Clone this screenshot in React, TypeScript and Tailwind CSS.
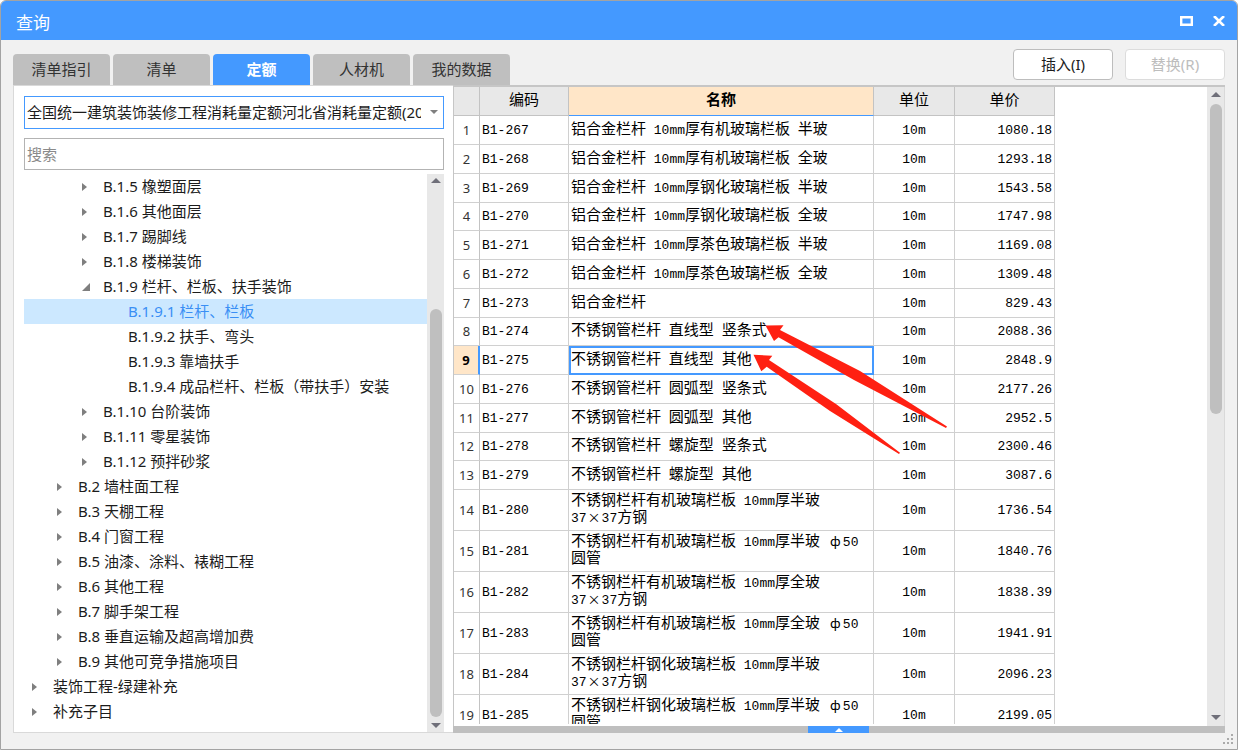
import { useState } from "react"
import { clsx } from "clsx"

interface TreeItem {
  label: string
  level: 1 | 2 | 3 | 4
  open?: boolean
}

interface QuotaRow {
  code: string
  name: string
  price: string
}

const tabs = ["清单指引", "清单", "定额", "人材机", "我的数据"]

const tree: TreeItem[] = [
  { label: "B.1.5 橡塑面层", level: 3 },
  { label: "B.1.6 其他面层", level: 3 },
  { label: "B.1.7 踢脚线", level: 3 },
  { label: "B.1.8 楼梯装饰", level: 3 },
  { label: "B.1.9 栏杆、栏板、扶手装饰", level: 3, open: true },
  { label: "B.1.9.1 栏杆、栏板", level: 4 },
  { label: "B.1.9.2 扶手、弯头", level: 4 },
  { label: "B.1.9.3 靠墙扶手", level: 4 },
  { label: "B.1.9.4 成品栏杆、栏板（带扶手）安装", level: 4 },
  { label: "B.1.10 台阶装饰", level: 3 },
  { label: "B.1.11 零星装饰", level: 3 },
  { label: "B.1.12 预拌砂浆", level: 3 },
  { label: "B.2 墙柱面工程", level: 2 },
  { label: "B.3 天棚工程", level: 2 },
  { label: "B.4 门窗工程", level: 2 },
  { label: "B.5 油漆、涂料、裱糊工程", level: 2 },
  { label: "B.6 其他工程", level: 2 },
  { label: "B.7 脚手架工程", level: 2 },
  { label: "B.8 垂直运输及超高增加费", level: 2 },
  { label: "B.9 其他可竞争措施项目", level: 2 },
  { label: "装饰工程-绿建补充", level: 1 },
  { label: "补充子目", level: 1 },
]

const rows: QuotaRow[] = [
  { code: "B1-267", name: "铝合金栏杆 10mm厚有机玻璃栏板 半玻", price: "1080.18" },
  { code: "B1-268", name: "铝合金栏杆 10mm厚有机玻璃栏板 全玻", price: "1293.18" },
  { code: "B1-269", name: "铝合金栏杆 10mm厚钢化玻璃栏板 半玻", price: "1543.58" },
  { code: "B1-270", name: "铝合金栏杆 10mm厚钢化玻璃栏板 全玻", price: "1747.98" },
  { code: "B1-271", name: "铝合金栏杆 10mm厚茶色玻璃栏板 半玻", price: "1169.08" },
  { code: "B1-272", name: "铝合金栏杆 10mm厚茶色玻璃栏板 全玻", price: "1309.48" },
  { code: "B1-273", name: "铝合金栏杆", price: "829.43" },
  { code: "B1-274", name: "不锈钢管栏杆 直线型 竖条式", price: "2088.36" },
  { code: "B1-275", name: "不锈钢管栏杆 直线型 其他", price: "2848.9" },
  { code: "B1-276", name: "不锈钢管栏杆 圆弧型 竖条式", price: "2177.26" },
  { code: "B1-277", name: "不锈钢管栏杆 圆弧型 其他", price: "2952.5" },
  { code: "B1-278", name: "不锈钢管栏杆 螺旋型 竖条式", price: "2300.46" },
  { code: "B1-279", name: "不锈钢管栏杆 螺旋型 其他", price: "3087.6" },
  { code: "B1-280", name: "不锈钢栏杆有机玻璃栏板 10mm厚半玻\n37×37方钢", price: "1736.54" },
  { code: "B1-281", name: "不锈钢栏杆有机玻璃栏板 10mm厚半玻 ф50\n圆管", price: "1840.76" },
  { code: "B1-282", name: "不锈钢栏杆有机玻璃栏板 10mm厚全玻\n37×37方钢", price: "1838.39" },
  { code: "B1-283", name: "不锈钢栏杆有机玻璃栏板 10mm厚全玻 ф50\n圆管", price: "1941.91" },
  { code: "B1-284", name: "不锈钢栏杆钢化玻璃栏板 10mm厚半玻\n37×37方钢", price: "2096.23" },
  { code: "B1-285", name: "不锈钢栏杆钢化玻璃栏板 10mm厚半玻 ф50\n圆管", price: "2199.05" },
]

const indent = { 1: "pl-2", 2: "pl-[33px]", 3: "pl-[58px]", 4: "pl-[83px]" }

const cell = "border-r border-b border-[#d0d0d0] p-0"
const headCell = "border-r border-b border-[#c3c3c3] bg-[#e8e8e8] p-0 font-normal"

// Latin runs are set in a smaller mono so that they are half as wide as the hanzi,
// × and ф take a full hanzi cell
function MixedText({ text }: { text: string }) {
  return (
    <>
      {text.split(/([ 0-9a-zA-Z]+|[×ф])/).map((part, i) => {
        if (i % 2 === 0) return part
        if (part === "×" || part === "ф") {
          return <span key={i} className="inline-block w-[15px] text-center text-[13px] leading-[13px] font-['Noto_Sans_CJK_SC',sans-serif]">{part}</span>
        }
        return <span key={i} className="text-[13px]">{part}</span>
      })}
    </>
  )
}

function Expander({ item }: { item: TreeItem }) {
  return (
    <svg viewBox="0 0 10 10" className="w-[10px] h-[10px] shrink-0 fill-[#7f7f7f]" aria-hidden="true">
      {item.level < 4 && (item.open ? <path d="M8 1V9H0Z" /> : <path d="M0 1L5 5L0 9Z" />)}
    </svg>
  )
}

function ScrollBar({ thumb, className }: { thumb: string; className?: string }) {
  return (
    <div className={clsx("w-[17px] shrink-0 bg-[#e8e8e8] flex flex-col items-center", className)}>
      <svg viewBox="0 0 10 5" className="w-[10px] h-[5px] my-1 shrink-0 fill-[#6f6f79]" aria-hidden="true"><path d="M0 5L5 0L10 5Z" /></svg>
      <div className="flex-1 w-3">
        <div className={clsx("w-3 rounded-full bg-[#bfbfbf]", thumb)} />
      </div>
      <svg viewBox="0 0 10 5" className="w-[10px] h-[5px] my-1 shrink-0 fill-[#6f6f79]" aria-hidden="true"><path d="M0 0H10L5 5Z" /></svg>
    </div>
  )
}

export default function App() {
  const [tab, setTab] = useState("定额")
  const [node, setNode] = useState("B.1.9.1 栏杆、栏板")
  const [current, setCurrent] = useState("B1-275")

  return (
    <div className="h-screen flex flex-col relative overflow-hidden rounded-t-md border border-[#a3a3a3] bg-[#f1f1f1] text-[15px] text-[#1c1c1c] font-['Noto_Sans','Noto_Sans_CJK_SC',sans-serif]">
      {/* Title bar */}
      <header className="h-[39px] shrink-0 flex items-center bg-[#4499ff] pl-[15px] pr-3 text-white">
        <h1 className="flex-1 text-[17px] leading-6 pt-1">查询</h1>
        <button aria-label="最大化" className="mr-5">
          <svg viewBox="0 0 13 10" className="w-[13px] h-[10px]" fill="none" stroke="currentColor"><path d="M1.2 1.2H11.8V8.8H1.2Z" strokeWidth="2.4" /></svg>
        </button>
        <button aria-label="关闭">
          <svg viewBox="0 0 12 10" className="w-3 h-[10px]" fill="none" stroke="currentColor"><path d="M1 0L11 10M11 0L1 10" strokeWidth="2.6" /></svg>
        </button>
      </header>

      {/* Tabs and actions */}
      <div className="h-[45px] shrink-0 flex items-end px-3">
        <div className="flex gap-[3px]" role="tablist">
          {tabs.map((t) => (
            <button
              key={t}
              role="tab"
              aria-selected={t === tab}
              onClick={() => setTab(t)}
              className={clsx("w-[97px] h-[31px] rounded-t-sm", t === tab ? "bg-[#4499ff] text-white font-bold" : "bg-[#bfbfbf] text-[#333]")}
            >
              {t}
            </button>
          ))}
        </div>
        <div className="ml-auto flex gap-3 pb-[5px]">
          <button className="w-[100px] h-[31px] rounded-sm border border-[#bdbdbd] bg-white">插入(I)</button>
          <button disabled className="w-[100px] h-[31px] rounded-sm border border-[#dcdcdc] bg-white text-[#bdbdbd]">替换(R)</button>
        </div>
      </div>

      <main className="flex-1 min-h-0 flex mx-3 mb-4 bg-white">
        {/* Quota library */}
        <aside className="w-[440px] shrink-0 flex flex-col border-t border-l border-b border-[#d9d9d9] pt-[10px] pl-[10px] pr-[9px]">
          <div className="relative">
            <select aria-label="定额库" className="block w-full h-[33px] appearance-none border border-[#4499ff] bg-white pl-[2px] pr-[22px]">
              <option>全国统一建筑装饰装修工程消耗量定额河北省消耗量定额(2012)</option>
            </select>
            <svg viewBox="0 0 8 4" className="absolute right-[6px] top-[14px] w-2 h-1 fill-[#7f7f7f] pointer-events-none"><path d="M0 0H8L4 4Z" /></svg>
          </div>
          <input aria-label="搜索" placeholder="搜索" className="mt-[9px] h-[32px] border border-[#b3b3b3] px-[2px] placeholder:text-[#8a8a8a]" />
          <div className="mt-1 flex-1 min-h-0 flex">
            <ul className="flex-1 min-w-0 overflow-hidden">
              {tree.map((item) => (
                <li key={item.label}>
                  <button
                    onClick={() => setNode(item.label)}
                    className={clsx("w-full h-[25px] flex items-center gap-[11px] text-left whitespace-nowrap", indent[item.level], item.label === node && "bg-[#cce8ff] text-[#3a8ff5]")}
                  >
                    <Expander item={item} />
                    {item.label}
                  </button>
                </li>
              ))}
            </ul>
            <ScrollBar thumb="mt-[122px] h-[408px]" />
          </div>
        </aside>

        {/* Quota list */}
        <section className="flex-1 min-w-0 flex flex-col">
          <div className="relative flex-1 min-h-0 flex border-t-2 border-l border-[#c6c6c6] overflow-hidden">
            <div className="flex-1 min-w-0 overflow-hidden mb-[2px]">
              <table className="table-fixed w-[601px] border-separate border-spacing-0 leading-[17px] text-black font-['Liberation_Mono','Noto_Sans_CJK_SC',monospace]">
                <colgroup>
                  <col className="w-[26px]" />
                  <col className="w-[89px]" />
                  <col className="w-[305px]" />
                  <col className="w-[81px]" />
                  <col className="w-[100px]" />
                </colgroup>
                <thead>
                  <tr className="h-[29px]">
                    <th className={headCell} aria-label="序号" />
                    <th className={headCell}>编码</th>
                    <th className="border-r border-b border-r-[#c3c3c3] border-b-[#4499ff] bg-[#ffe6c8] p-0 font-bold">名称</th>
                    <th className={headCell}>单位</th>
                    <th className={headCell}>单价</th>
                  </tr>
                </thead>
                <tbody>
                  {rows.map((row, i) => {
                    const active = row.code === current
                    return (
                      <tr key={row.code} onClick={() => setCurrent(row.code)} className={row.name.includes("\n") ? "h-[41px]" : "h-[29px] nth-[4n]:h-[28px]"}>
                        <th className={clsx("border-b border-b-[#d0d0d0] p-0 text-[13px] font-['Noto_Sans',sans-serif]", active ? "border-r-2 border-r-[#4499ff] bg-[#ffe6c8] font-bold" : "border-r border-r-[#c3c3c3] font-normal text-[#333]")}>
                          {i + 1}
                        </th>
                        <td className={clsx(cell, "pl-[2px] text-[13px]")}>{row.code}</td>
                        <td className={clsx(cell, "pl-[2px] whitespace-pre", active && "outline-2 outline-[#4499ff] -outline-offset-2")}>
                          <MixedText text={row.name} />
                        </td>
                        <td className={clsx(cell, "text-center text-[13px]")}>10m</td>
                        <td className={clsx(cell, "text-right pr-[2px] text-[13px]")}>{row.price}</td>
                      </tr>
                    )
                  })}
                </tbody>
              </table>
            </div>
            <ScrollBar thumb="mt-[3px] h-[310px]" className="border-r border-[#d9d9d9] box-content pt-px pb-[2px]" />

            {/* Annotation arrows */}
            <svg viewBox="0 0 200 140" className="absolute left-[296px] top-[233px] w-[200px] h-[140px] fill-[#ff2012] pointer-events-none" aria-hidden="true">
              <path d="M15.5 5.5L33.5 5.3L30 10L110 51L197 106.6L196 108L104 60L28.5 17.3L24 21Z" />
              <path d="M3.5 34.7L22.3 35.7L19 40L86 84L150 132.7L149 134L80 91L16.7 46.7L11.3 51.3Z" />
            </svg>
          </div>
          <div className="h-[7px] shrink-0 flex bg-[#bfbfbf]">
            <button aria-label="展开" className="ml-[355px] w-[61px] bg-[#4499ff] flex items-center justify-center">
              <svg viewBox="0 0 8 4" className="w-2 h-1 fill-white"><path d="M0 4L4 0L8 4Z" /></svg>
            </button>
          </div>
        </section>
      </main>

      {/* Resize grip */}
      <svg viewBox="0 0 10 10" className="absolute right-1 bottom-[5px] w-[10px] h-[10px] fill-[#aaa]" aria-hidden="true">
        <path d="M8 0h2v2h-2zM4 4h2v2h-2zM8 4h2v2h-2zM0 8h2v2h-2zM4 8h2v2h-2zM8 8h2v2h-2z" />
      </svg>
    </div>
  )
}
